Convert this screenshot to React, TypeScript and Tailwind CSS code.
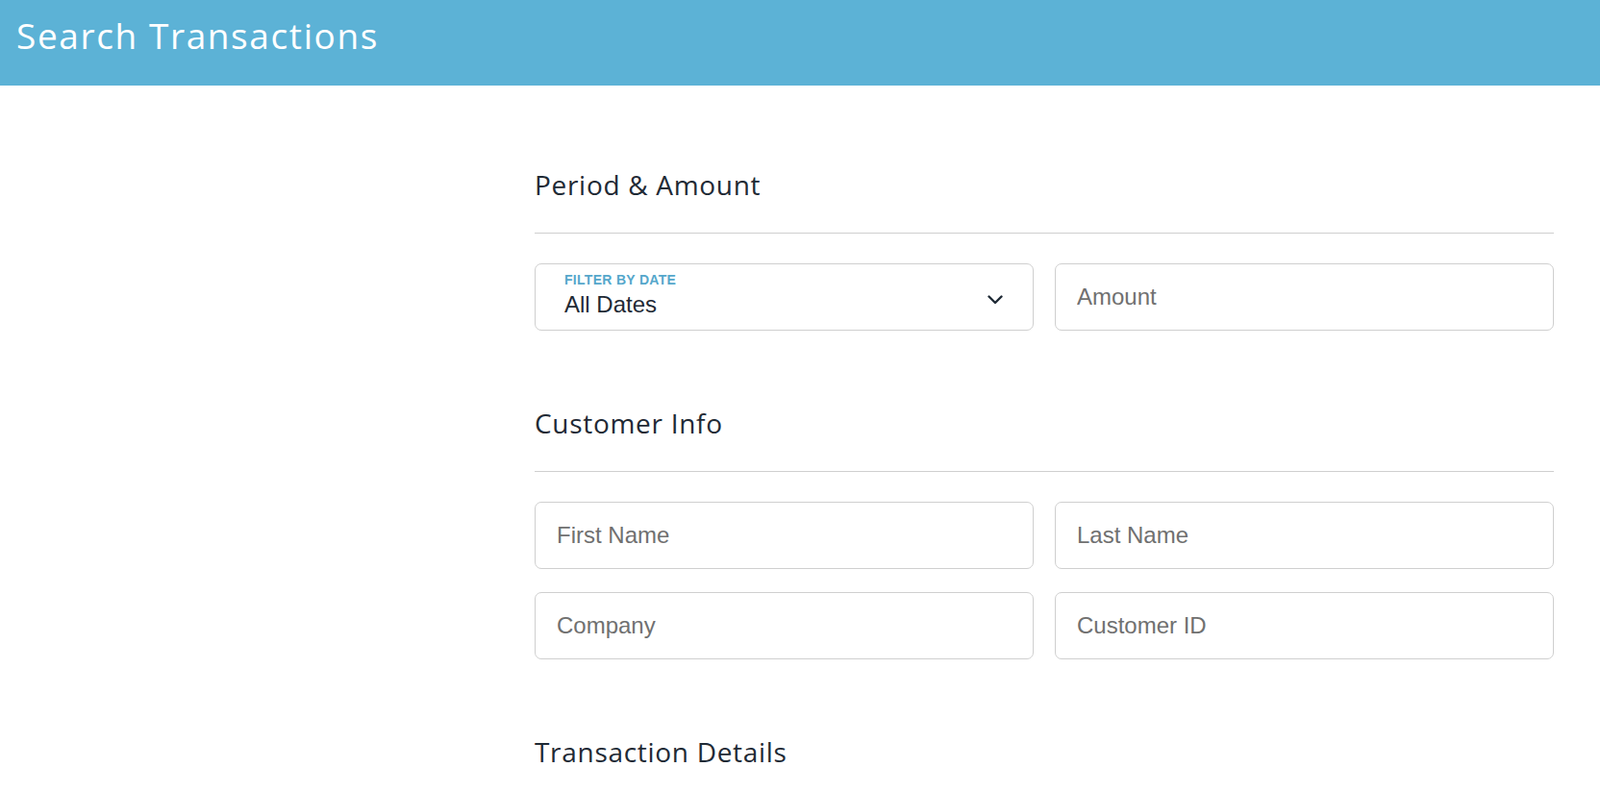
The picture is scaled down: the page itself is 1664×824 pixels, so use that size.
import React from "react";

const headFont = { fontFamily: '"Open Sans", "Noto Sans", sans-serif' };

function SectionHeading({ title, first }: { title: string; first?: boolean }) {
  return (
    <div className={first ? "" : "mt-[82px]"}>
      <h2 className="text-[28px] leading-[28px] text-[#1f2a35] tracking-[0.7px] font-normal font-['Open_Sans','Noto_Sans',sans-serif]">
        {title}
      </h2>
      <div className="mt-[36px] h-px bg-[#cfcfcf]" />
    </div>
  );
}

function TextField({ placeholder }: { placeholder: string }) {
  return (
    <input
      type="text"
      placeholder={placeholder}
      className="h-[70px] w-full rounded-[7px] border border-[#cfcfcf] bg-white pl-[22px] pr-4 text-[24px] text-[#1f2a35] placeholder:text-[#707070] outline-none font-['Liberation_Sans',Arial,sans-serif]"
    />
  );
}

function DateSelect() {
  return (
    <div className="flex h-[70px] w-full items-start justify-between rounded-[7px] border border-[#cfcfcf] bg-white pl-[30px] pr-[31px] pt-[9px] font-['Liberation_Sans',Arial,sans-serif]">
      <div className="flex flex-col">
        <span className="text-[14px] leading-[14px] font-bold text-[#55a7cb] tracking-[0.3px]">
          FILTER BY DATE
        </span>
        <span className="mt-[7px] text-[24px] leading-[24px] text-[#1f2a35]">All Dates</span>
      </div>
      <svg width="16" height="10" viewBox="0 0 16 10" className="mt-[23px]" fill="none">
        <path d="M1.5 1.5 L8 8 L14.5 1.5" stroke="#1f2a35" strokeWidth="2.4" strokeLinecap="round" strokeLinejoin="round" />
      </svg>
    </div>
  );
}

export default function App() {
  return (
    <div className="min-h-screen w-full bg-white">
      <header className="h-[89px] w-full bg-[#5cb2d6] pl-[17px] pt-[18px]">
        <h1
          className="text-[37px] leading-[37px] text-white font-normal tracking-[1.6px]"
          style={headFont}
        >
          Search Transactions
        </h1>
      </header>
      <main className="pl-[556px] pr-[48px] pt-[89px] pb-16">
        <SectionHeading title="Period & Amount" first />
        <div className="mt-[31px] grid grid-cols-2 gap-x-[22px]">
          <DateSelect />
          <TextField placeholder="Amount" />
        </div>

        <SectionHeading title="Customer Info" />
        <div className="mt-[31px] grid grid-cols-2 gap-x-[22px] gap-y-[24px]">
          <TextField placeholder="First Name" />
          <TextField placeholder="Last Name" />
          <TextField placeholder="Company" />
          <TextField placeholder="Customer ID" />
        </div>

        <SectionHeading title="Transaction Details" />
      </main>
    </div>
  );
}
